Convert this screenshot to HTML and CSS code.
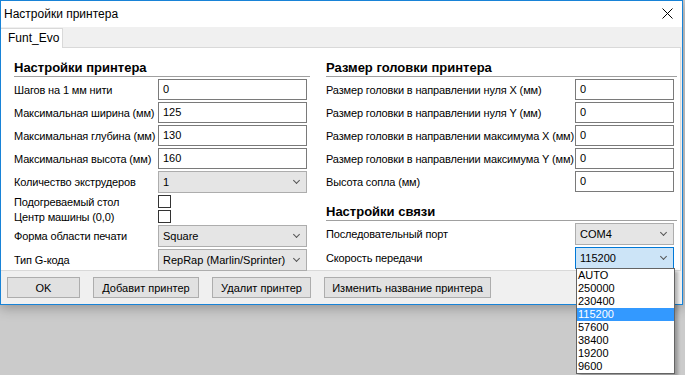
FILE: index.html
```html
<!DOCTYPE html>
<html lang="ru">
<head>
  <meta charset="UTF-8">
  <title>Настройки принтера</title>
  <link rel="stylesheet" href="styles.css">
</head>
<body>
  <div class="window">
    <!-- Заголовок окна -->
    <div class="titlebar">
      <span class="title">Настройки принтера</span>
      <svg class="close" width="11" height="11" viewBox="0 0 11 11">
        <path d="M0.5 0.5L10.5 10.5M10.5 0.5L0.5 10.5" stroke="#000" stroke-width="1" fill="none"/>
      </svg>
    </div>

    <!-- Вкладки -->
    <div class="tabs">
      <div class="tab">Funt_Evo</div>
    </div>

    <div class="panel">
      <!-- Левая колонка -->
      <div class="column column-left">
        <h2 class="section">Настройки принтера</h2>
        <div class="row"><span class="label">Шагов на 1 мм нити</span><div class="field">0</div></div>
        <div class="row"><span class="label">Максимальная ширина (мм)</span><div class="field">125</div></div>
        <div class="row"><span class="label">Максимальная глубина (мм)</span><div class="field">130</div></div>
        <div class="row"><span class="label">Максимальная высота (мм)</span><div class="field">160</div></div>
        <div class="row row-select"><span class="label">Количество экструдеров</span><div class="combo">1<span class="chevron"></span></div></div>
        <div class="row row-check"><span class="label">Подогреваемый стол</span><span class="checkbox"></span></div>
        <div class="row row-check"><span class="label">Центр машины (0,0)</span><span class="checkbox"></span></div>
        <div class="row row-select"><span class="label">Форма области печати</span><div class="combo">Square<span class="chevron"></span></div></div>
        <div class="row row-select"><span class="label">Тип G-кода</span><div class="combo">RepRap (Marlin/Sprinter)<span class="chevron"></span></div></div>
      </div>

      <!-- Правая колонка -->
      <div class="column column-right">
        <h2 class="section">Размер головки принтера</h2>
        <div class="row"><span class="label">Размер головки в направлении нуля X (мм)</span><div class="field">0</div></div>
        <div class="row"><span class="label">Размер головки в направлении нуля Y (мм)</span><div class="field">0</div></div>
        <div class="row"><span class="label">Размер головки в направлении максимума X (мм)</span><div class="field">0</div></div>
        <div class="row"><span class="label">Размер головки в направлении максимума Y (мм)</span><div class="field">0</div></div>
        <div class="row"><span class="label">Высота сопла (мм)</span><div class="field">0</div></div>

        <h2 class="section section-second">Настройки связи</h2>
        <div class="row row-select"><span class="label">Последовательный порт</span><div class="combo">COM4<span class="chevron"></span></div></div>
        <div class="row row-select">
          <span class="label">Скорость передачи</span>
          <div class="combo combo-open">115200<span class="chevron"></span>
            <!-- Раскрытый список -->
            <ul class="dropdown">
              <li>AUTO</li>
              <li>250000</li>
              <li>230400</li>
              <li class="selected">115200</li>
              <li>57600</li>
              <li>38400</li>
              <li>19200</li>
              <li>9600</li>
            </ul>
          </div>
        </div>
      </div>
    </div>

    <!-- Кнопки -->
    <div class="buttons">
      <button class="btn btn-ok">OK</button>
      <button class="btn btn-add">Добавит принтер</button>
      <button class="btn btn-remove">Удалит принтер</button>
      <button class="btn btn-rename">Изменить название принтера</button>
    </div>
  </div>
</body>
</html>
```

FILE: styles.css
```css
/* Сброс */
* {
  margin: 0;
  padding: 0;
  box-sizing: border-box;
}
html, body {
  height: 100%;
}
body {
  background: #cbcbcb;
  font-family: "Liberation Sans", Arial, sans-serif;
  font-size: 11px;
  color: #000;
  overflow: hidden;
}
/* Окно */
.window {
  position: relative;
  width: 683px;
  height: 305px;
  border: 1px solid #1883d7;
  background: #f0f0f0;
  box-shadow: 0 3px 12px rgba(0, 0, 0, 0.28);
  display: flex;
  flex-direction: column;
}
.titlebar {
  height: 26px;
  flex-shrink: 0;
  background: #fff;
  display: flex;
  align-items: center;
  justify-content: space-between;
  padding: 0 9px 0 3px;
}
.title {
  font-size: 12px;
}
.close {
  display: block;
  margin-top: -1px;
}
/* Вкладки */
.tabs {
  height: 20px;
  flex-shrink: 0;
  display: flex;
  align-items: flex-end;
}
.tab {
  position: relative;
  z-index: 1;
  height: 20px;
  width: 62px;
  margin-bottom: -1px;
  padding: 2px 0 0 7px;
  font-size: 12px;
  background: #fff;
  border-right: 1px solid #d9d9d9;
  border-top: 1px solid #d9d9d9;
}
/* Панель с настройками */
.panel {
  height: 224px;
  flex-shrink: 0;
  margin-right: 1px;
  background: #fff;
  border: 1px solid #d9d9d9;
  border-left: none;
  padding: 12px 0 0 13px;
  display: flex;
  gap: 16px;
}
.column-left {
  width: 296px;
}
.column-right {
  width: 351px;
}
.section {
  height: 17px;
  line-height: 16px;
  font-size: 13px;
  font-weight: bold;
  border-bottom: 1px solid #a0a0a0;
}
.section-second {
  margin-top: 12px;
}
.row {
  display: grid;
  grid-template-columns: 144px 149px;
  align-items: center;
  height: 21px;
  margin-top: 2px;
  white-space: nowrap;
}
.column-right .row {
  grid-template-columns: 249px 99px;
}
.row-select {
  height: 22px;
}
.row-check {
  height: 13px;
}
.label {
  letter-spacing: -0.15px;
}
.field {
  height: 21px;
  border: 1px solid #7a7a7a;
  padding: 0 4px;
  line-height: 19px;
}
.combo {
  position: relative;
  height: 22px;
  border: 1px solid #adadad;
  background: #e5e5e5;
  padding: 0 4px;
  line-height: 20px;
}
.combo-open {
  background: #cce4f7;
  border-color: #0078d7;
}
.chevron {
  position: absolute;
  right: 7px;
  top: 6px;
  width: 5px;
  height: 5px;
  border-right: 1px solid #555;
  border-bottom: 1px solid #555;
  transform: rotate(45deg);
}
.checkbox {
  width: 13px;
  height: 13px;
  border: 1px solid #333;
  background: #fff;
}
/* Выпадающий список */
.dropdown {
  position: absolute;
  top: 20px;
  left: 0;
  width: 99px;
  list-style: none;
  background: #fff;
  border: 1px solid #646464;
  box-shadow: 3px 3px 3px rgba(0, 0, 0, 0.25);
  z-index: 10;
}
.dropdown li {
  height: 13px;
  line-height: 13px;
  padding-left: 1px;
}
.dropdown .selected {
  background: #3399ff;
  color: #fff;
}
/* Нижние кнопки */
.buttons {
  flex: 1;
  display: flex;
  gap: 13px;
  padding: 6px 0 0 6px;
}
.btn {
  height: 21px;
  background: #e1e1e1;
  border: 1px solid #adadad;
  font-family: inherit;
  font-size: 11px;
  color: #000;
}
.btn-ok {
  width: 73px;
}
.btn-add {
  width: 106px;
}
.btn-remove {
  width: 99px;
}
.btn-rename {
  width: 167px;
}
```
